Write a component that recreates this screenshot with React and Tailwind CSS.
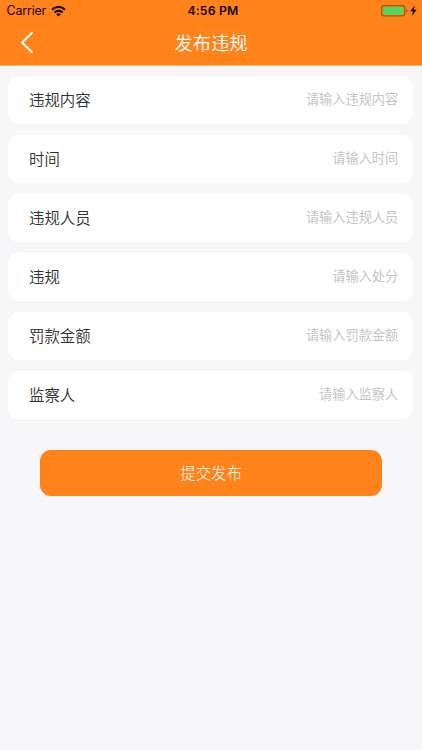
const fields = [
  { label: '违规内容', placeholder: '请输入违规内容' },
  { label: '时间', placeholder: '请输入时间' },
  { label: '违规人员', placeholder: '请输入违规人员' },
  { label: '违规', placeholder: '请输入处分' },
  { label: '罚款金额', placeholder: '请输入罚款金额' },
  { label: '监察人', placeholder: '请输入监察人' },
];

function WifiIcon() {
  return (
    <svg className="ml-[4.5px] h-[11px] w-[15px]" viewBox="0 0 15 11" fill="none" stroke="#140800" strokeWidth="2.2">
      <path d="M1 3.7a9.2 9.2 0 0 1 13 0" />
      <path d="M3.5 6.5a5.7 5.7 0 0 1 8 0" />
      <path d="M7.5 10.6 5.2 8.3a3.3 3.3 0 0 1 4.6 0Z" fill="#140800" stroke="none" />
    </svg>
  );
}

function StatusBar() {
  return (
    <div className="grid h-[22px] grid-cols-3 items-center font-['Inter','Liberation_Sans',sans-serif] text-[#140800]">
      <div className="flex items-center pl-[6.5px]">
        <span className="text-[12.4px] leading-[22px] tracking-[-0.15px]">Carrier</span>
        <WifiIcon />
      </div>
      <div className="pl-[4px] text-center text-[12.2px] leading-[22px] font-semibold tracking-[0.2px]">4:56 PM</div>
      <div className="flex items-center justify-end pr-[5px]">
        <svg className="h-[12px] w-[36px]" viewBox="0 0 36 12">
          <rect x="0.6" y="0.6" width="23.2" height="10.2" rx="2.4" fill="#ff821a" stroke="#a65509" strokeWidth="1.2" />
          <rect x="2.1" y="2" width="20.2" height="7.4" rx="1" fill="#4cd964" />
          <path d="M25 4q1.5.5 1.5 1.8T25 7.6Z" fill="#a65509" />
          <path d="M33.8.4 29.2 6.3h2.8l-1.3 4.6 5-6.2h-3Z" fill="#140800" />
        </svg>
      </div>
    </div>
  );
}

function NavBar() {
  return (
    <div className="grid h-[41px] grid-cols-[60px_1fr_60px] items-center">
      <button className="pl-[20px]" aria-label="返回">
        <svg className="h-[23px] w-[14px]" viewBox="0 0 14 23" fill="none" stroke="white" strokeWidth="2" strokeLinecap="round" strokeLinejoin="round">
          <path d="M12 1.8 2 11.5l10 9.7" />
        </svg>
      </button>
      <h1 className="text-center text-[18.2px] leading-[41px] font-[350] text-white">发布违规</h1>
    </div>
  );
}

export default function App() {
  return (
    <div className="flex h-[750px] w-full flex-col overflow-hidden bg-[#f7f7fa] font-['Noto_Sans_CJK_SC',sans-serif]">
      <header className="h-[65px] bg-[#ff821a]">
        <StatusBar />
        <NavBar />
      </header>
      <div className="h-px bg-[#ffb77c]" />
      <main className="pt-[10px] pr-[8.6px] pl-[8.4px]">
        <div className="flex flex-col gap-[11.1px]">
          {fields.map((f) => (
            <div key={f.label} className="flex h-[48px] items-center justify-between rounded-[11px] bg-white pr-[15.2px] pl-[20.6px]">
              <span className="pb-[2px] text-[15.4px] leading-[46px] font-[350] text-[#303030]">{f.label}</span>
              <span className="pb-[2px] text-[13.2px] leading-[46px] font-normal text-[#c4c4c9]">{f.placeholder}</span>
            </div>
          ))}
        </div>
        <button className="mx-[32px] mt-[30.4px] block h-[46px] w-[341.4px] rounded-[11px] bg-[#ff821a] pb-[2px] text-center text-[15.4px] leading-[44px] font-light text-white">
          提交发布
        </button>
      </main>
    </div>
  );
}
